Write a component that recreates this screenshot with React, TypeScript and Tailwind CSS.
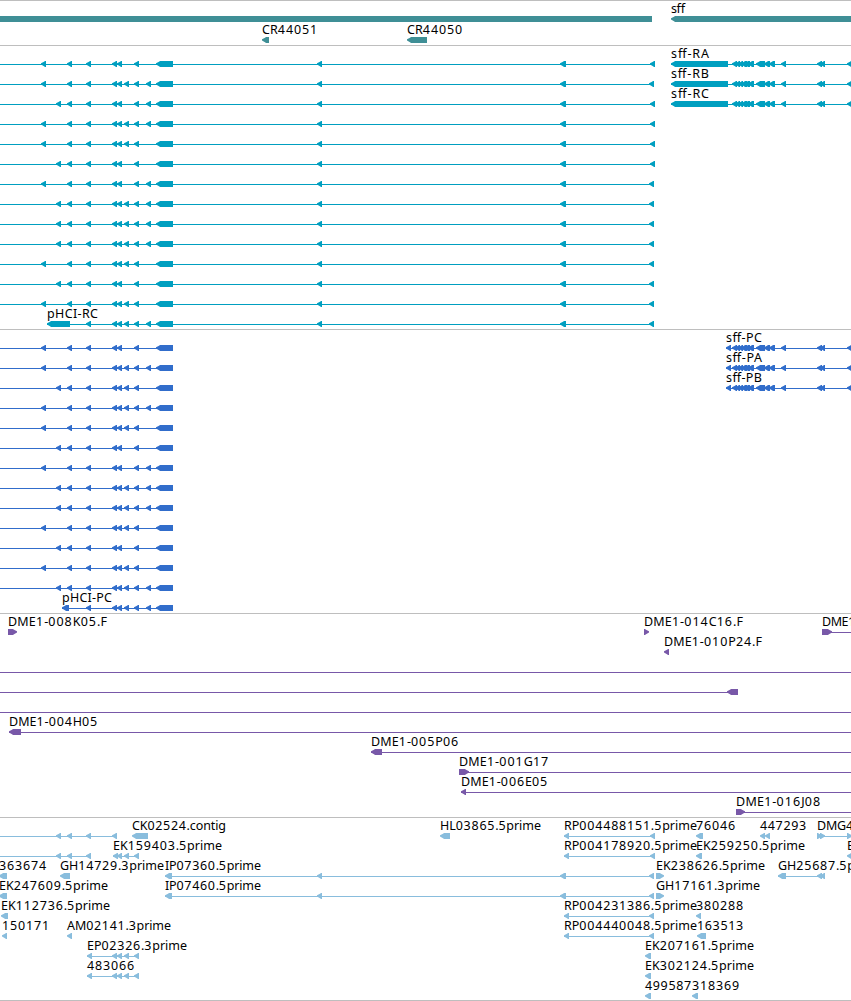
import React from 'react';

type Dir = 'l' | 'r';
type Exon = [number, number, Dir?];

interface Feature {
  row: number;
  label?: string;
  x?: number;
  w?: number;
  line?: [number, number];
  exons: Exon[];
}

const WIDTH = 851;

// Shared exon positions of the pHCI transcripts
const EXONS: Record<string, Exon> = {
  A: [41, 46],
  B: [56, 61],
  C: [67, 72],
  D: [86, 91],
  E: [112, 117],
  F: [117, 122],
  G: [124, 129],
  H: [134, 139],
  I: [146, 151],
  J: [156, 173],
};

const pick = (keys: string): Exon[] => keys.split('').map((k) => EXONS[k]);

const sffTail: Exon[] = [
  [732, 737], [735, 740], [738, 743], [741, 747], [744, 750], [748, 754],
  [756, 765], [764, 770], [769, 775], [781, 786], [817, 822], [820, 825], [847, 853],
];

const genes: Feature[] = [
  { row: 0, exons: [[-20, 652]] },
  { row: 0, label: 'sff', x: 671, w: 14, exons: [[671, 870]] },
  { row: 1, label: 'CR44051', x: 262, w: 56, exons: [[262, 269]] },
  { row: 1, label: 'CR44050', x: 407, w: 56, exons: [[407, 427]] },
];

const rnaRows: [string, number][] = [
  ['ACDEFHJ', 655], ['ACDEFGHIJ', 654], ['BCDEFHIJ', 655], ['ACDEFGHIJ', 655],
  ['ACDEFGHJ', 655], ['BCDEFHJ', 655], ['ACDEFHIJ', 654], ['BCDEFGHIJ', 654],
  ['BCDEFGHIJ', 654], ['BCDEFGHIJ', 654], ['ACDEFGHJ', 654], ['BCDEFHJ', 654],
  ['ACDEFGHJ', 654],
];

const transcripts: Feature[] = [
  ...rnaRows.map(([keys, end], row): Feature => ({
    row,
    line: [0, end],
    exons: [...pick(keys), [317, 322], [560, 566], [end - 5, end]],
  })),
  { row: 13, label: 'pHCI-RC', x: 47, w: 51, line: [47, 654], exons: [[47, 70], ...pick('DEFGHIJ'), [317, 322], [560, 566], [649, 654]] },
  ...['sff-RA', 'sff-RB', 'sff-RC'].map((label, row): Feature => ({
    row, label, x: 671, w: 38, line: [671, 851], exons: [[671, 728], ...sffTail],
  })),
];

const cdsRows = [
  'ACDEFHJ', 'ACDEFGHIJ', 'BCDEFGHJ', 'ACDEFGHIJ', 'ACDEFGHJ', 'BCDEFHJ', 'ACDEFHIJ',
  'BCDEFGHIJ', 'BCDEFGHIJ', 'ACDEFGHJ', 'BCDEFHJ', 'ACDEFGHJ', 'BCDEFGHIJ',
];

const cds: Feature[] = [
  ...cdsRows.map((keys, row): Feature => ({ row, line: [0, 173], exons: pick(keys) })),
  { row: 13, label: 'pHCI-PC', x: 62, w: 50, line: [62, 173], exons: [[62, 69], ...pick('DEFGHIJ')] },
  ...['sff-PC', 'sff-PA', 'sff-PB'].map((label, row): Feature => ({
    row, label, x: 726, w: 36, line: [726, 851], exons: [[726, 731], ...sffTail],
  })),
];

const clones: Feature[] = [
  { row: 0, label: 'DME1-008K05.F', x: 8, w: 99, exons: [[8, 17, 'r']] },
  { row: 0, label: 'DME1-014C16.F', x: 644, w: 99, exons: [[644, 649, 'r']] },
  { row: 0, label: 'DME1', x: 822, w: 34, line: [822, 851], exons: [[822, 832, 'r']] },
  { row: 1, label: 'DME1-010P24.F', x: 664, w: 98, exons: [[664, 669]] },
  { row: 2, line: [0, 851], exons: [] },
  { row: 3, line: [0, 738], exons: [[727, 738]] },
  { row: 4, line: [0, 851], exons: [] },
  { row: 5, label: 'DME1-004H05', x: 9, w: 89, line: [9, 851], exons: [[9, 21]] },
  { row: 6, label: 'DME1-005P06', x: 371, w: 88, line: [371, 851], exons: [[371, 382]] },
  { row: 7, label: 'DME1-001G17', x: 459, w: 90, line: [459, 851], exons: [[459, 469, 'r']] },
  { row: 8, label: 'DME1-006E05', x: 461, w: 87, line: [461, 851], exons: [[461, 466]] },
  { row: 9, label: 'DME1-016J08', x: 736, w: 85, line: [736, 851], exons: [[736, 745, 'r']] },
];

const ip: Exon[] = [[165, 172], [317, 322], [560, 566], [649, 654]];

const ests: Feature[] = [
  { row: 0, line: [0, 117], exons: pick('BCDE') },
  { row: 0, label: 'CK02524.contig', x: 132, w: 94, exons: [[132, 148]] },
  { row: 0, label: 'HL03865.5prime', x: 440, w: 101, exons: [[440, 450]] },
  { row: 0, label: 'RP004488151.5prime', x: 564, w: 133, line: [564, 655], exons: [[564, 569], [650, 655]] },
  { row: 0, label: '76046', x: 696, w: 40, exons: [[696, 703]] },
  { row: 0, label: '447293', x: 760, w: 47, exons: [[760, 765], [765, 770]] },
  { row: 0, label: 'DMG4', x: 817, w: 37, line: [817, 851], exons: [[817, 822, 'r'], [820, 825, 'r'], [847, 852, 'r']] },
  { row: 1, line: [0, 91], exons: pick('BCD') },
  { row: 1, label: 'EK159403.5prime', x: 113, w: 109, line: [113, 139], exons: [[113, 118], ...pick('FGH')] },
  { row: 1, label: 'RP004178920.5prime', x: 564, w: 133, line: [564, 655], exons: [[564, 569], [650, 655]] },
  { row: 1, label: 'EK259250.5prime', x: 696, w: 109, exons: [[696, 702]] },
  { row: 1, label: 'E', x: 847, exons: [[847, 853]] },
  { row: 2, label: '363674', x: -1, w: 48, exons: [[-1, 7]] },
  { row: 2, label: 'GH14729.3prime', x: 60, w: 104, exons: [[60, 70]] },
  { row: 2, label: 'IP07360.5prime', x: 165, w: 96, line: [165, 654], exons: ip },
  { row: 2, label: 'EK238626.5prime', x: 656, w: 109, exons: [[656, 664, 'r']] },
  { row: 2, label: 'GH25687.5prime', x: 778, w: 104, line: [778, 825], exons: [[778, 786], [817, 822], [820, 825]] },
  { row: 3, label: 'EK247609.5prime', x: -1, w: 109, exons: [[-1, 7]] },
  { row: 3, label: 'IP07460.5prime', x: 165, w: 96, line: [165, 654], exons: ip },
  { row: 3, label: 'GH17161.3prime', x: 656, w: 104, exons: [[656, 664, 'r']] },
  { row: 4, label: 'EK112736.5prime', x: 1, w: 109, exons: [[1, 8]] },
  { row: 4, label: 'RP004231386.5prime', x: 564, w: 133, line: [564, 654], exons: [[564, 569], [649, 654]] },
  { row: 4, label: '380288', x: 696, w: 48, exons: [[696, 701]] },
  { row: 5, label: '150171', x: 2, w: 48, exons: [[2, 7]] },
  { row: 5, label: 'AM02141.3prime', x: 67, w: 104, exons: [[67, 72]] },
  { row: 5, label: 'RP004440048.5prime', x: 564, w: 133, line: [564, 654], exons: [[564, 569], [649, 654]] },
  { row: 5, label: '163513', x: 697, w: 47, exons: [[697, 706]] },
  { row: 6, label: 'EP02326.3prime', x: 87, w: 100, line: [87, 139], exons: [[87, 92], ...pick('EFGH')] },
  { row: 6, label: 'EK207161.5prime', x: 645, w: 109, exons: [[645, 651]] },
  { row: 7, label: '483066', x: 87, w: 48, line: [87, 139], exons: [[87, 92], ...pick('EFGH')] },
  { row: 7, label: 'EK302124.5prime', x: 645, w: 109, exons: [[645, 651]] },
  { row: 8, label: '499587', x: 645, w: 47, exons: [[645, 651]] },
  { row: 8, label: '318369', x: 692, w: 48, exons: [[692, 698]] },
];

function arrow([a, b, dir]: Exon, y: number) {
  const tip = dir === 'r' ? b : a;
  const back = dir === 'r' ? a : b;
  const s = dir === 'r' ? -1 : 1;
  return [
    [tip, y + 2.2], [tip + 3 * s, y + 0.7], [tip + 4 * s, y], [back, y],
    [back, y + 6], [tip + 4 * s, y + 6], [tip + 3 * s, y + 5.2], [tip, y + 3.6],
  ].map((p) => p.join(',')).join(' ');
}

interface TrackProps {
  features: Feature[];
  height: number;
  color: string;
  pitch?: number;
}

// Digits are set a little wider than letters
function Label({ text }: { text: string }) {
  return (
    <>
      {text.split(/(\d+)/).filter(Boolean).map((part, i) => (
        <tspan key={i} className={/\d/.test(part) ? 'tracking-[0.8px]' : 'tracking-normal'}>{part}</tspan>
      ))}
    </>
  );
}

function Track({ features, height, color, pitch = 20 }: TrackProps) {
  return (
    <section className="border-t border-[#bebebe]">
      <svg width={WIDTH} height={height} className={`block ${color}`} fill="currentColor">
        {features.map((f, i) => {
          const top = f.row * pitch;
          return (
            <g key={i}>
              {f.line && <rect x={f.line[0]} y={top + 18} width={f.line[1] - f.line[0]} height={1} />}
              {f.exons.map((e, j) => (
                <polygon key={j} points={arrow(e, top + 15)} />
              ))}
              {f.label && (
                <text
                  x={f.x}
                  y={top + 12}
                  textLength={f.w}
                  className="fill-black font-['Noto_Sans','Open_Sans',sans-serif] text-[12.5px]"
                >
                  <Label text={f.label} />
                </text>
              )}
            </g>
          );
        })}
      </svg>
    </section>
  );
}

function App() {
  return (
    <main className="w-[851px] h-[1001px] overflow-hidden bg-white border-b border-[#bebebe]">
      <Track features={genes} height={44} color="text-[#3f8f96]" pitch={21} />
      <Track features={transcripts} height={283} color="text-[#009fc0]" />
      <Track features={cds} height={283} color="text-[#316dcb]" />
      <Track features={clones} height={203} color="text-[#7858a8]" />
      <Track features={ests} height={182} color="text-[#89bddd]" />
    </main>
  );
}

export default App;
